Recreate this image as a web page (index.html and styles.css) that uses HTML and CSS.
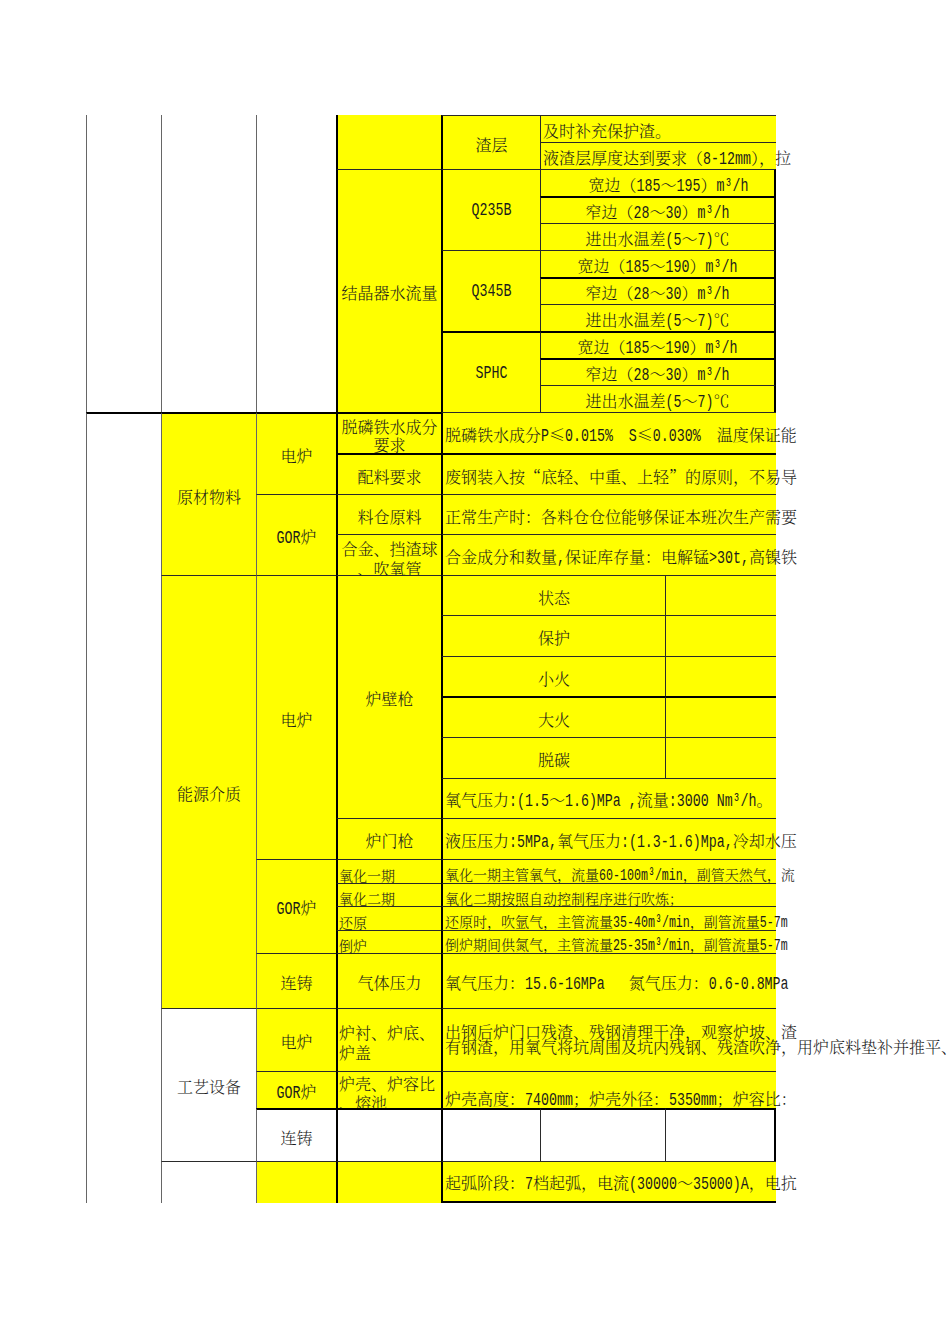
FILE: index.html
```html
<!DOCTYPE html>
<html lang="zh-CN">
<head>
<meta charset="utf-8">
<title>工艺检查表</title>
<link rel="stylesheet" href="styles.css">
</head>
<body>
<div class="sheet">
  <!-- row 1 -->
  <div class="c g nt rs11"></div>
  <div class="c g nt rs11"></div>
  <div class="c g nt rs11"></div>
  <div class="c y tk nt rs2"></div>
  <div class="c y tk rs2"><span>渣层</span></div>
  <div class="c y cs2 tl"><span>及时补充保护渣。</span></div>
  <!-- row 2 -->
  <div class="c y cs2 tl"><span>液渣层厚度达到要求（<span class="l">8-12mm</span>），拉</span></div>
  <!-- row 3 -->
  <div class="c y tk rs9"><span>结晶器水流量</span></div>
  <div class="c y tk rs3"><span class="l">Q235B</span></div>
  <div class="c y cs2 rt shift"><span>宽边（<span class="l">185</span>～<span class="l">195</span>）<span class="l">m³/h</span></span></div>
  <div class="c y cs2 rt tt"><span>窄边（<span class="l">28</span>～<span class="l">30</span>）<span class="l">m³/h</span></span></div>
  <div class="c y cs2 rt"><span>进出水温差<span class="l">(5</span>～<span class="l">7)</span>℃</span></div>
  <!-- row 6 -->
  <div class="c y tk rs3"><span class="l">Q345B</span></div>
  <div class="c y cs2 rt"><span>宽边（<span class="l">185</span>～<span class="l">190</span>）<span class="l">m³/h</span></span></div>
  <div class="c y cs2 rt tt"><span>窄边（<span class="l">28</span>～<span class="l">30</span>）<span class="l">m³/h</span></span></div>
  <div class="c y cs2 rt"><span>进出水温差<span class="l">(5</span>～<span class="l">7)</span>℃</span></div>
  <!-- row 9 -->
  <div class="c y tk tt rs3"><span class="l">SPHC</span></div>
  <div class="c y cs2 rt tt"><span>宽边（<span class="l">185</span>～<span class="l">190</span>）<span class="l">m³/h</span></span></div>
  <div class="c y cs2 rt tt"><span>窄边（<span class="l">28</span>～<span class="l">30</span>）<span class="l">m³/h</span></span></div>
  <div class="c y cs2 rt"><span>进出水温差<span class="l">(5</span>～<span class="l">7)</span>℃</span></div>

  <!-- row 12 -->
  <div class="c g tt rs20"></div>
  <div class="c y g tt rs4"><span>原材物料</span></div>
  <div class="c y g tt rs2"><span>电炉</span></div>
  <div class="c y tk tt w w1"><span>脱磷铁水成分<br>要求</span></div>
  <div class="c y tk cs3 tl"><span>脱磷铁水成分<span class="l">P</span>≤<span class="l">0.015%  S</span>≤<span class="l">0.030%  </span>温度保证能</span></div>
  <!-- row 13 -->
  <div class="c y tk tt"><span>配料要求</span></div>
  <div class="c y tk tt cs3 tl"><span>废钢装入按“底轻、中重、上轻”的原则，不易导</span></div>
  <!-- row 14 -->
  <div class="c y g rs2"><span><span class="l">GOR</span>炉</span></div>
  <div class="c y tk"><span>料仓原料</span></div>
  <div class="c y tk cs3 tl"><span>正常生产时：各料仓仓位能够保证本班次生产需要</span></div>
  <!-- row 15 -->
  <div class="c y tk w w2"><span>合金、挡渣球<br>、吹氧管</span></div>
  <div class="c y tk cs3 tl"><span>合金成分和数量<span class="l">,</span>保证库存量：电解锰<span class="l">&gt;30t,</span>高镍铁</span></div>

  <!-- row 16 -->
  <div class="c y g rs12"><span>能源介质</span></div>
  <div class="c y g rs7"><span>电炉</span></div>
  <div class="c y tk rs6"><span>炉壁枪</span></div>
  <div class="c y tk cs2"><span>状态</span></div>
  <div class="c y"></div>
  <div class="c y tk cs2"><span>保护</span></div>
  <div class="c y"></div>
  <div class="c y tk cs2"><span>小火</span></div>
  <div class="c y"></div>
  <div class="c y tk tt cs2"><span>大火</span></div>
  <div class="c y tt"></div>
  <div class="c y tk cs2"><span>脱碳</span></div>
  <div class="c y"></div>
  <div class="c y tk cs3 tl"><span>氧气压力<span class="l">:(1.5</span>～<span class="l">1.6)MPa ,</span>流量<span class="l">:3000 Nm³/h</span>。</span></div>
  <!-- row 22 -->
  <div class="c y tk"><span>炉门枪</span></div>
  <div class="c y tk cs3 tl"><span>液压压力<span class="l">:5MPa,</span>氧气压力<span class="l">:(1.3-1.6)Mpa,</span>冷却水压</span></div>
  <!-- row 23 -->
  <div class="c y g rs4"><span><span class="l">GOR</span>炉</span></div>
  <div class="c y tk tl n sm"><span>氧化一期</span></div>
  <div class="c y tk cs3 tl sm"><span>氧化一期主管氧气，流量<span class="l">60-100m³/min</span>，副管天然气，流</span></div>
  <div class="c y tk tl n sm"><span>氧化二期</span></div>
  <div class="c y tk cs3 tl sm"><span>氧化二期按照自动控制程序进行吹炼；</span></div>
  <div class="c y tk tl n sm"><span>还原</span></div>
  <div class="c y tk cs3 tl sm"><span>还原时，吹氩气，主管流量<span class="l">35-40m³/min</span>，副管流量<span class="l">5-7m</span></span></div>
  <div class="c y tk tl n sm"><span>倒炉</span></div>
  <div class="c y tk cs3 tl sm"><span>倒炉期间供氮气，主管流量<span class="l">25-35m³/min</span>，副管流量<span class="l">5-7m</span></span></div>
  <!-- row 27 -->
  <div class="c y g"><span>连铸</span></div>
  <div class="c y tk"><span>气体压力</span></div>
  <div class="c y tk cs3 tl"><span>氧气压力：<span class="l">15.6-16MPa   </span>氮气压力：<span class="l">0.6-0.8MPa</span></span></div>

  <!-- row 28 -->
  <div class="c g rs3"><span>工艺设备</span></div>
  <div class="c y g"><span>电炉</span></div>
  <div class="c y tk tl n w w3"><span>炉衬、炉底、<br>炉盖</span></div>
  <div class="c y tk cs3 tl w w4"><span>出钢后炉门口残渣、残钢清理干净，观察炉坡、渣<br>有钢渣，用氧气将坑周围及坑内残钢、残渣吹净，用炉底料垫补并推平、</span></div>
  <!-- row 29 -->
  <div class="c y g"><span><span class="l">GOR</span>炉</span></div>
  <div class="c y tk tl n w w5"><span>炉壳、炉容比<br>、熔池</span></div>
  <div class="c y tk cs3 tl bot"><span>炉壳高度：<span class="l">7400mm</span>；炉壳外径：<span class="l">5350mm</span>；炉容比：</span></div>
  <!-- row 30 -->
  <div class="c g tt"><span>连铸</span></div>
  <div class="c tk tt"></div>
  <div class="c tk tt"></div>
  <div class="c tt"></div>
  <div class="c tt rt"></div>
  <!-- row 31 -->
  <div class="c g"></div>
  <div class="c y g"></div>
  <div class="c y tk"></div>
  <div class="c y tk cs3 tl bb"><span>起弧阶段：<span class="l">7</span>档起弧，电流<span class="l">(30000</span>～<span class="l">35000)A</span>，电抗</span></div>
</div>
</body>
</html>
```

FILE: styles.css
```css
html, body {
  margin: 0;
  padding: 0;
  background: #ffffff;
}

body {
  width: 950px;
  height: 1344px;
  font-family: "Noto Serif CJK SC", "Noto Sans CJK SC", sans-serif;
  font-weight: 300;
  color: #1c1c1c;
}

.sheet {
  display: grid;
  width: 690px;
  margin: 115px 0 0 86px;
  grid-template-columns: 75px 95px 80px 105px 99px 125px 111px;
  grid-template-rows:
    repeat(11, 27px)
    41px 41px 40px 41px
    40px 41px 40px 41px 41px 40px
    41px
    24px 23px 24px 23px
    55px
    63px 37px 53px 42px;
}

.c {
  box-sizing: border-box;
  min-width: 0;
  min-height: 0;
  display: flex;
  align-items: center;
  justify-content: center;
  padding-top: 4px;
  border-left: 1px solid #2a2a2a;
  border-top: 1px solid #2a2a2a;
  font-size: 16px;
  line-height: 18px;
  white-space: nowrap;
}

.c > span {
  display: block;
}

.y { background: #ffff00; }

/* borders */
.g  { border-left-color: #666666; }
.nt { border-top: 0; }
.tk { border-left: 2px solid #000000; }
.tt { border-top: 2px solid #000000; }
.rt { border-right: 2px solid #000000; }
.bb { border-bottom: 2px solid #000000; }

/* alignment */
.tl { justify-content: flex-start; padding-left: 2px; }
.tl.n { padding-left: 1px; }
.shift { padding-left: 22px; }

.bot {
  align-items: flex-end;
  padding-top: 0;
}

.sm {
  font-size: 14px;
  line-height: 16px;
  align-items: flex-end;
  padding-top: 0;
}

/* latin half-width runs: narrow monospace, stretched upright like the sheet's latin glyphs */
.l {
  display: inline-block;
  font-family: "Liberation Mono", monospace;
  font-weight: 400;
  font-size: 13.3px;
  line-height: 13.3px;
  white-space: pre;
  transform: scaleY(1.4);
  transform-origin: 50% 77%;
}
.sm .l {
  font-size: 11.65px;
  line-height: 11.65px;
  transform: scaleY(1.45);
}

/* multi-line cells */
.w {
  align-items: flex-start;
  overflow: hidden;
}
.w1 { padding-top: 4px; text-align: center; }
.w2 { padding-top: 4px; line-height: 20px; text-align: center; }
.w3 { padding-top: 14px; line-height: 20px; }
.w4 { padding-top: 15px; line-height: 15px; overflow: visible; }
.w5 { padding-top: 2px; line-height: 19px; }

/* spans */
.rs2  { grid-row: span 2; }
.rs3  { grid-row: span 3; }
.rs4  { grid-row: span 4; }
.rs6  { grid-row: span 6; }
.rs7  { grid-row: span 7; }
.rs9  { grid-row: span 9; }
.rs11 { grid-row: span 11; }
.rs12 { grid-row: span 12; }
.rs20 { grid-row: span 20; }
.cs2  { grid-column: span 2; }
.cs3  { grid-column: span 3; }
```
